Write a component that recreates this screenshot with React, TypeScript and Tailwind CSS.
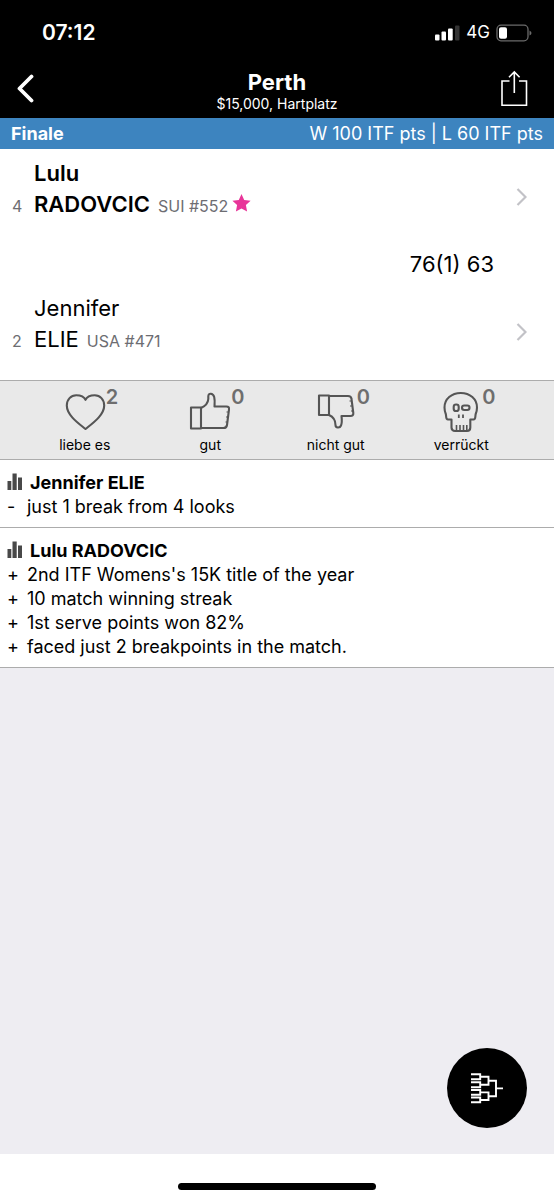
import type { ReactNode } from "react";

type Player = {
  seed: number;
  first: string;
  last: string;
  info: string;
  winner?: boolean;
};

const players: Player[] = [
  { seed: 4, first: "Lulu", last: "RADOVCIC", info: "SUI #552", winner: true },
  { seed: 2, first: "Jennifer", last: "ELIE", info: "USA #471" },
];

const notes = [
  { name: "Jennifer ELIE", sign: "-", items: ["just 1 break from 4 looks"] },
  {
    name: "Lulu RADOVCIC",
    sign: "+",
    items: [
      "2nd ITF Womens's 15K title of the year",
      "10 match winning streak",
      "1st serve points won 82%",
      "faced just 2 breakpoints in the match.",
    ],
  },
];

const reactions = [
  {
    label: "liebe es",
    count: 2,
    icon: <path d="M21.5 38C14 32 2.8 24 2.8 14.5C2.8 8.5 7 4.3 12.2 4.3C16.5 4.3 20 5.5 21.5 8.8C23 5.5 26.5 4.3 30.8 4.3C36 4.3 40.2 8.5 40.2 14.5C40.2 24 29 32 21.5 38Z" />,
  },
  {
    label: "gut",
    count: 0,
    icon: (
      <>
        <path d="M2 16.5H12V37.5H2Z" />
        <path d="M12 17C16.5 15 19 12.5 19.3 8V5.5C19.3 1.5 24 2 25.2 6C26 9 25.7 12 25.5 15.5H37.5C39.5 15.5 40.3 16.5 40 18.5L38 34C37.7 36 36.5 37 34.5 37H12" />
        <path d="M37.5 21H39.5M37 26H39M36.5 31H38.5" strokeWidth="1.2" />
      </>
    ),
  },
  {
    label: "nicht gut",
    count: 0,
    icon: (
      <>
        <path d="M4 4.5H14V24H4Z" />
        <path d="M14 5H33C35 5 36.3 6 36.5 8L38.3 22C38.5 24 37.5 25 35.5 25H26.5C27 29 27 32 26 34.5C24.8 37.5 20.5 37 20.5 34C20.5 29 18.5 26 14 24" />
        <path d="M34.5 10H36.5M35 15H37M36 20H38" strokeWidth="1.2" />
      </>
    ),
  },
  {
    label: "verrückt",
    count: 0,
    icon: (
      <>
        <path d="M11.5 28.5H8C5.5 28.5 6.5 25.5 5.8 23C4.8 20.5 4.5 18.5 4.5 16.5C4.5 8 11.5 2 20.8 2C30 2 37 8 37 16.5C37 18.5 36.7 20.5 35.7 23C35 25.5 36 28.5 33.5 28.5H30.3V36.5C30.3 38.8 29 40 27 40H15C12.8 40 11.5 38.8 11.5 36.5Z" />
        <path d="M16.5 34V39.5M20 34V39.5M23.5 34V39.5M26.8 34V39.5" strokeWidth="1.6" />
        <rect x="13.7" y="13.5" width="5" height="6.5" rx="2.3" />
        <rect x="22" y="14.5" width="7.5" height="4.5" rx="2.2" />
        <path d="M18.8 23.5V27M23 23.5V27" strokeWidth="1.8" />
      </>
    ),
  },
];

function StatusBar() {
  return (
    <div className="flex h-[66px] items-center justify-between pr-[22px] pl-[42px]">
      <span className="text-[21px] font-semibold">07:12</span>
      <div className="flex items-center gap-[6px]">
        <svg width="25" height="16" viewBox="0 0 25 16" fill="white" aria-hidden="true">
          <rect x="0" y="9.5" width="4.5" height="6" rx="1" />
          <rect x="6.5" y="6.5" width="4.5" height="9" rx="1" />
          <rect x="13" y="3.5" width="4.7" height="12" rx="1" />
          <rect x="20" y="0.5" width="4.5" height="15" rx="1" fill="#333" />
        </svg>
        <span className="text-[17px]">4G</span>
        <svg width="36" height="18" viewBox="0 0 36 18" aria-hidden="true">
          <rect x="1" y="1.2" width="31" height="15.6" rx="4" fill="none" stroke="#6b6b6b" strokeWidth="1.3" />
          <rect x="3" y="3.3" width="8" height="11.5" rx="2" fill="white" />
          <path d="M33.5 6.5Q35.5 7.5 35.5 9Q35.5 10.5 33.5 11.5Z" fill="#6b6b6b" />
        </svg>
      </div>
    </div>
  );
}

function NavBar() {
  return (
    <div className="grid h-[52px] grid-cols-[1fr_auto_1fr] items-start">
      <button type="button" aria-label="Zurück" className="mt-2 ml-4 justify-self-start">
        <svg width="20" height="30" viewBox="0 0 20 30" fill="none" stroke="white" strokeWidth="3.8" strokeLinecap="round" strokeLinejoin="round">
          <path d="M15.5 2.5L3.5 14.5L15.5 26.5" />
        </svg>
      </button>
      <div className="flex flex-col items-center">
        <h1 className="text-[22px] leading-8 font-bold">Perth</h1>
        <p className="text-sm leading-3">$15,000, Hartplatz</p>
      </div>
      <button type="button" aria-label="Teilen" className="mt-1 mr-[26px] justify-self-end">
        <svg width="28" height="38" viewBox="0 0 28 38" fill="none" stroke="white" strokeWidth="1.6">
          <path d="M9.5 11H2V35.3H26.5V11H19" />
          <path d="M14.3 23V2M9 7.3L14.3 2L19.6 7.3" />
        </svg>
      </button>
    </div>
  );
}

function PlayerRow({ player }: { player: Player }) {
  return (
    <button type="button" className="flex w-full items-center justify-between pr-[27px] pl-3 text-left">
      <span className="grid grid-cols-[22px_auto] items-baseline pt-[9px] pb-[22px]">
        <span className={`col-start-2 text-[22px] leading-[31px] ${player.winner ? "font-semibold" : ""}`}>{player.first}</span>
        <span className="text-base leading-[31px] text-[#6d6d72]">{player.seed}</span>
        <span className="flex items-baseline">
          <span className={`text-[22px] leading-[31px] ${player.winner ? "font-semibold" : ""}`}>{player.last}</span>
          <span className="ml-2 text-base leading-[31px] text-[#6d6d72]">{player.info}</span>
          {player.winner && (
            <svg className="ml-1" width="19" height="18" viewBox="0 0 19 18" fill="#e83599" aria-hidden="true">
              <path d="M9.5 0L12.2 5.9L18.6 6.7L13.9 11.1L15.1 17.5L9.5 14.4L3.9 17.5L5.1 11.1L0.4 6.7L6.8 5.9Z" />
            </svg>
          )}
        </span>
      </span>
      <svg width="11" height="20" viewBox="0 0 11 20" fill="none" stroke="#c2c2c7" strokeWidth="2.2" aria-hidden="true">
        <path d="M1.5 2L9.5 10L1.5 18" />
      </svg>
    </button>
  );
}

function Reaction({ label, count, icon }: { label: string; count: number; icon: ReactNode }) {
  return (
    <button type="button" className="flex flex-col items-center pt-[10px]">
      <span className="relative">
        <svg width="42" height="42" viewBox="0 0 42 42" fill="none" stroke="#555" strokeWidth="2.1" strokeLinejoin="round" aria-hidden="true">
          {icon}
        </svg>
        <span className="absolute -top-1 left-[42px] text-xl leading-5 font-semibold text-[#6e6e6e]">{count}</span>
      </span>
      <span className="mt-1 text-sm leading-4">{label}</span>
    </button>
  );
}

function BarsIcon() {
  return (
    <svg className="mb-[3px]" width="16" height="17" viewBox="0 0 16 17" fill="#484848" aria-hidden="true">
      <rect x="0.5" y="8" width="3.8" height="9" />
      <rect x="5.5" y="0.5" width="4.2" height="16.5" />
      <rect x="11" y="4.5" width="4" height="12.5" />
    </svg>
  );
}

export default function App() {
  return (
    <div className="flex min-h-screen flex-col bg-white font-['Inter','Liberation_Sans',sans-serif] text-black">
      <header className="bg-black text-white">
        <StatusBar />
        <NavBar />
      </header>

      <main className="relative flex flex-1 flex-col bg-[#eeedf2]">
        <div className="flex h-[31px] items-center justify-between bg-[#3d84bf] px-[11px] text-lg text-white">
          <h2 className="font-bold">Finale</h2>
          <p>W 100 ITF pts | L 60 ITF pts</p>
        </div>

        <section className="bg-white pb-px">
          <PlayerRow player={players[0]} />
          <p className="pr-[60px] text-right text-[22px] leading-10">76(1) 63</p>
          <PlayerRow player={players[1]} />
        </section>

        <section className="grid h-20 grid-cols-4 border-y border-[#acacac] bg-[#e9e9e9] pr-[30px] pl-[22px]">
          {reactions.map((r) => (
            <Reaction key={r.label} {...r} />
          ))}
        </section>

        {notes.map((note) => (
          <section key={note.name} className="border-b border-[#acacac] bg-white px-[7px] pt-[11px] pb-2">
            <h3 className="flex items-center gap-[7px] text-lg leading-6 font-bold">
              <BarsIcon />
              {note.name}
            </h3>
            <ul>
              {note.items.map((item) => (
                <li key={item} className="flex text-lg leading-6">
                  <span className="w-5">{note.sign}</span>
                  {item}
                </li>
              ))}
            </ul>
          </section>
        ))}

        <button
          type="button"
          aria-label="Turnierbaum"
          className="absolute right-[27px] bottom-[26px] flex size-20 items-center justify-center rounded-full bg-black"
        >
          <svg width="32" height="32" viewBox="0 0 32 32" fill="none" stroke="white" strokeWidth="1.9">
            <path d="M0 2.3H9.2V7.3H0M0 10.2H9.2V15.2H0M0 18H9.2V22.8H0M0 25.5H9.2V30.3H0" />
            <path d="M9.2 4.8H17.5V12.7H9.2M9.2 20.4H17.5V28H9.2" />
            <path d="M17.5 8.7H25V24.2H17.5M25 16.4H32" />
          </svg>
        </button>
      </main>

      <footer className="flex h-[46px] items-center justify-center pt-[18px]">
        <div className="h-[7px] w-[198px] rounded-full bg-black" />
      </footer>
    </div>
  );
}
